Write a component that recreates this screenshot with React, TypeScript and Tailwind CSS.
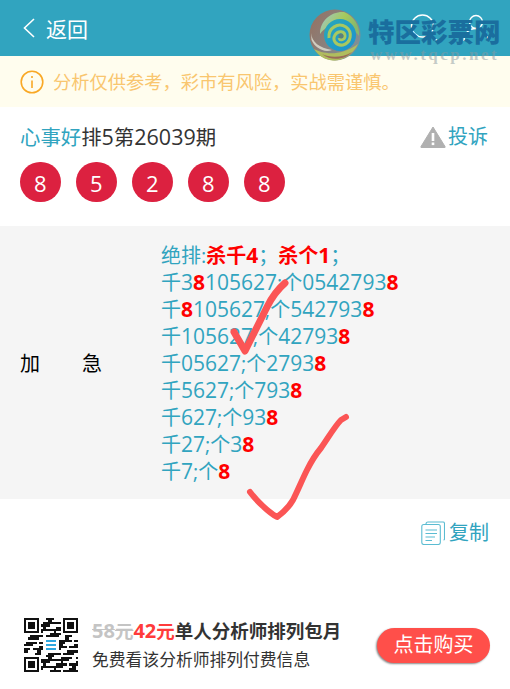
const FONT = "font-['Open_Sans','Noto_Sans_CJK_SC',sans-serif]";

const balls = ["8", "5", "2", "8", "8"];

const lines = [
  ["千", "3", "*8", "105627", ";个", "0542793", "*8"],
  ["千", "*8", "105627", ";个", "542793", "*8"],
  ["千", "105627", ";个", "42793", "*8"],
  ["千", "05627", ";个", "2793", "*8"],
  ["千", "5627", ";个", "793", "*8"],
  ["千", "627", ";个", "93", "*8"],
  ["千", "27", ";个", "3", "*8"],
  ["千", "7", ";个", "*8"],
];

const finder = (x: number, y: number) => (
  <g key={`${x}-${y}`}>
    <rect x={x} y={y} width={7} height={7} fill="#111" />
    <rect x={x + 1} y={y + 1} width={5} height={5} fill="#fff" />
    <rect x={x + 2} y={y + 2} width={3} height={3} fill="#111" />
  </g>
);

const QrCode = () => {
  const cells = [];
  for (let r = 0; r < 25; r++) {
    for (let c = 0; c < 25; c++) {
      const corner =
        (r < 8 && c < 8) || (r < 8 && c > 16) || (r > 16 && c < 8);
      if (corner) continue;
      const v = Math.imul(r * 31 + c * 17 + 5, 2654435761) ^ Math.imul(c * 97 + r, 40503);
      if (((v >>> 13) & 7) < 4)
        cells.push(
          <rect key={`${r}-${c}`} x={c} y={r} width={1} height={1} fill="#111" />,
        );
    }
  }
  return (
    <svg viewBox="0 0 25 25" className="h-[54px] w-[54px] shrink-0" shapeRendering="crispEdges">
      {cells}
      {finder(0, 0)}
      {finder(18, 0)}
      {finder(0, 18)}
      <rect x={9} y={9} width={7} height={7} fill="#fff" />
      <rect x={10} y={10} width={5} height={1} fill="#2ea7e0" />
      <rect x={10} y={12} width={5} height={1} fill="#2ea7e0" />
      <rect x={10} y={14} width={5} height={1} fill="#2ea7e0" />
    </svg>
  );
};

const Watermark = () => (
  <div className="pointer-events-none absolute left-[308px] top-[8px] flex items-start">
    <svg viewBox="0 0 54 54" className="h-[54px] w-[54px]">
      <defs>
        <linearGradient id="rim" x1="0" y1="0" x2="1" y2="0.6">
          <stop offset="0" stopColor="#96705f" />
          <stop offset="1" stopColor="#7f8f96" />
        </linearGradient>
        <linearGradient id="swirl" x1="0" y1="0" x2="1" y2="0.4">
          <stop offset="0" stopColor="#9cc8d2" />
          <stop offset="0.6" stopColor="#a6c95c" />
          <stop offset="1" stopColor="#86b86c" />
        </linearGradient>
        <linearGradient id="core" x1="0" y1="0" x2="1" y2="1">
          <stop offset="0" stopColor="#2aa8b8" />
          <stop offset="1" stopColor="#1a92d0" />
        </linearGradient>
      </defs>
      <circle cx="27" cy="27" r="25.5" fill="url(#rim)" />
      <path d="M12 26 C12 12 24 3 36 4 C46 8 52 18 51 28 C44 18 32 14 22 18 C17 20 14 23 12 26 Z" fill="url(#swirl)" />
      <circle cx="32" cy="27" r="16" fill="url(#core)" />
      <path d="M21 30 C20 20 30 14 38 19 C45 24 43 35 35 37 C28 38 24 32 27 27 C30 22 37 23 37 28 C37 32 32 33 31 30" fill="none" stroke="#a8c860" strokeWidth="3" />
      <circle cx="33" cy="28" r="2.5" fill="#5f7f78" />
      <path d="M6 41 C14 45 30 50 50 36 C45 47 34 53 25 52.5 C16 52 10 47 6 41 Z" fill="#b0bd5e" />
      <path d="M3 25 C4 34 11 40 24 42 C16 45 7 40 3.5 32 Z" fill="#e6e8da" opacity="0.75" />
      <path d="M14 46 C22 50 34 50 44 44 C38 51 24 54 14 46 Z" fill="#9a6a58" />
    </svg>
    <div className="ml-[6px] flex flex-col">
      <span className="mt-[6px] text-[26.5px] leading-[33px] font-black whitespace-nowrap text-[#1a6e9e] font-['Noto_Sans_CJK_SC',sans-serif]">
        特区彩票网
      </span>
      <span className="mt-[-1px] ml-[2px] text-[17px] leading-[18px] font-bold tracking-[2.5px] whitespace-nowrap text-[#8a9aa0]/50 font-['Liberation_Serif',serif]">
        www.tqcp.net
      </span>
    </div>
  </div>
);

const CheckMarks = () => (
  <svg className="pointer-events-none absolute top-0 left-0 h-[689px] w-[510px]" viewBox="0 0 510 689" fill="none">
    <path
      d="M234 332 L245 351 C252 337 260 321 267 307 C272 297 278 289 285 283"
      stroke="#fb5555"
      strokeWidth="7"
      strokeLinecap="round"
      strokeLinejoin="round"
    />
    <path
      d="M250 492 C256 500 268 512 277 517 C284 512 289 507 293 500 C298 490 302 480 307 470 C311 462 316 454 321 448 C328 438 335 426 341 420 L346 417"
      stroke="#fb5555"
      strokeWidth="6"
      strokeLinecap="round"
      strokeLinejoin="round"
    />
  </svg>
);

export default function App() {
  return (
    <div className={`relative flex h-[689px] w-[510px] flex-col overflow-hidden bg-white ${FONT}`}>
      <header className="flex h-[56px] shrink-0 items-center justify-between bg-[#31a4bf] pr-[21px] pl-[23px] text-white">
        <div className="flex items-center">
          <svg viewBox="0 0 12 20" className="h-[20px] w-[12px]" fill="none" stroke="#fff" strokeWidth="1.6">
            <path d="M11 1 L1.5 10 L11 19" />
          </svg>
          <span className="mt-[2px] ml-[11px] text-[21px] leading-none">返回</span>
        </div>
        <div className="flex items-center gap-[25px]">
          <svg viewBox="0 0 28 28" className="h-[28px] w-[28px]" fill="none" stroke="#fff" strokeWidth="1.4">
            <circle cx="12.5" cy="12" r="11" />
            <path d="M20.5 20 L27 26.5" />
          </svg>
          <svg viewBox="0 0 26 28" className="h-[28px] w-[26px]" fill="none" stroke="#fff" strokeWidth="1.4">
            <circle cx="13" cy="8" r="6.5" />
            <path d="M1 27 C1 19 6 14.5 13 14.5 C20 14.5 25 19 25 27" />
          </svg>
        </div>
      </header>

      <div className="flex h-[51px] shrink-0 items-center bg-[#fffdee] pl-[20px]">
        <svg viewBox="0 0 24 24" className="h-[24px] w-[24px]" fill="none" stroke="#f9a825" strokeWidth="1.6">
          <circle cx="12" cy="12" r="10.8" />
          <path d="M12 10.5 V18" />
          <path d="M12 6 V8" />
        </svg>
        <span className="ml-[9px] text-[18.25px] whitespace-nowrap text-[#f9c66f]">
          分析仅供参考，彩市有风险，实战需谨慎。
        </span>
      </div>

      <div className="flex h-[119px] shrink-0 flex-col pr-[22px] pl-[20px]">
        <div className="mt-[15px] flex h-[30px] items-center justify-between">
          <div className="text-[20.4px] whitespace-nowrap text-[#333]">
            <span className="text-[#31a4bf]">心事好</span>排<span className="text-[21.5px]">5</span>第
            <span className="text-[21.5px]">26039</span>期
          </div>
          <div className="flex items-center">
            <svg viewBox="0 0 26 22" className="h-[22px] w-[26px]" aria-hidden="true">
              <path d="M13 1 L25 20.5 Q25.5 22 24 22 L2 22 Q0.5 22 1 20.5 Z" fill="#b0b0b0" stroke="#b0b0b0" strokeLinejoin="round" />
              <rect x="11.7" y="7" width="2.6" height="8" fill="#fff" />
              <rect x="11.7" y="16.5" width="2.6" height="2.6" fill="#fff" />
            </svg>
            <span className="ml-[2px] text-[20px] text-[#31a4bf]">投诉</span>
          </div>
        </div>
        <div className="mt-[10px] flex gap-[15.5px]">
          {balls.map((n, i) => (
            <div
              key={i}
              className="flex h-[40px] w-[40.5px] items-center justify-center rounded-full bg-[#dc2140] pt-[2px] text-[22px] text-white"
            >
              {n}
            </div>
          ))}
        </div>
      </div>

      <div className="flex h-[273px] shrink-0 items-center bg-[#f5f5f5] pt-[2px]">
        <div className="flex w-[161px] shrink-0 pl-[20px] text-[20px] text-black">
          <span>加</span>
          <span className="ml-[42px]">急</span>
        </div>
        <div className="text-[20px] leading-[27.1px] whitespace-nowrap text-[#31a4bf]">
          <div>
            绝排:<b className="text-[#f00]">杀千<span className="text-[21px]">4</span></b>；
            <b className="text-[#f00]">杀个<span className="text-[21px]">1</span></b>；
          </div>
          {lines.map((parts, i) => (
            <div key={i}>
              {parts.map((p, j) => {
                if (p.startsWith("*"))
                  return (
                    <b key={j} className="text-[21px] text-[#f00]">
                      {p.slice(1)}
                    </b>
                  );
                if (/\d/.test(p))
                  return (
                    <span key={j} className="text-[21px]">
                      {p}
                    </span>
                  );
                return <span key={j}>{p}</span>;
              })}
            </div>
          ))}
        </div>
      </div>

      <div className="flex h-[68px] shrink-0 items-center justify-end pr-[21px]">
        <svg viewBox="0 0 24 24" className="h-[24px] w-[24px]" fill="none" stroke="#5bbcd2" strokeWidth="1.1">
          <path d="M5 3 Q5 1 7 1 H22 Q23.5 1 23.5 2.5 V18 Q23.5 19 22.5 19" />
          <rect x="0.8" y="3.5" width="18.5" height="20" rx="2" />
          <path d="M4.5 9 H16 M4.5 12.5 H16 M4.5 16 H14 M4.5 19.5 H11" />
        </svg>
        <span className="ml-[4px] text-[20px] text-[#31a4bf]">复制</span>
      </div>

      <div className="mt-[50px] flex items-center pr-[20px] pl-[24px]">
        <QrCode />
        <div className="ml-[14px] flex min-w-0 flex-1 flex-col">
          <div className="mt-[1px] text-[18.5px] leading-[26px] font-bold whitespace-nowrap text-[#333]">
            <s className="text-[#c4c4c4]">
              <span className="text-[20px]">58</span>元
            </s>
            <span className="text-[#ff3b3b]">
              <span className="text-[20px]">42</span>元
            </span>
            单人分析师排列包月
          </div>
          <div className="mt-[3px] text-[16.8px] leading-[26px] whitespace-nowrap text-[#333]">
            免费看该分析师排列付费信息
          </div>
        </div>
        <button className="flex h-[35px] w-[113px] shrink-0 items-center justify-center rounded-full bg-[#ff4f4a] text-[20px] text-white shadow-[-1px_1px_2px_#888]">
          点击购买
        </button>
      </div>

      <Watermark />
      <CheckMarks />
    </div>
  );
}
